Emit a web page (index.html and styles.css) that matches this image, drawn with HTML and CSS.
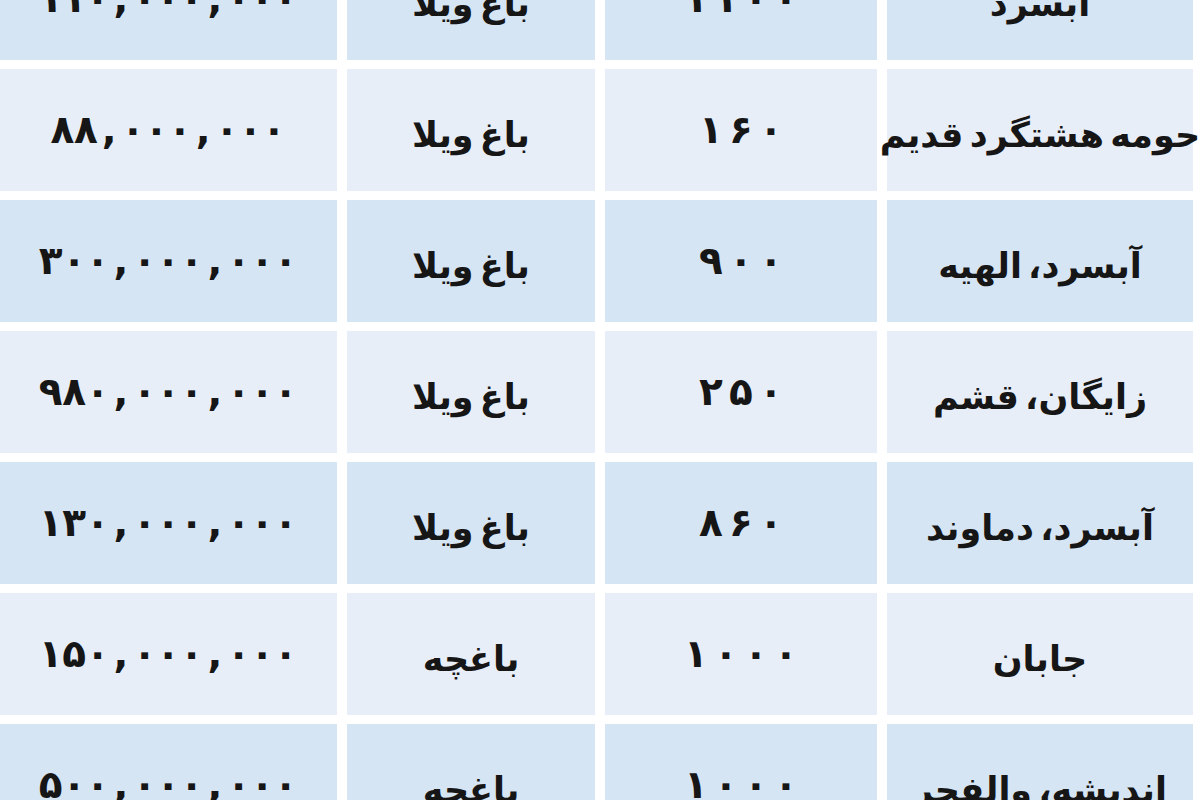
FILE: index.html
```html
<!DOCTYPE html>
<html lang="fa">
<head>
<meta charset="utf-8">
<title>قیمت باغ ویلا</title>
<link rel="stylesheet" href="styles.css">
</head>
<body>
<div class="table" dir="rtl">
  <div class="row blue">
    <div class="cell">آبسرد</div>
    <div class="cell"><span class="digits area"><span>۱</span><span>۱</span><span>۰</span><span>۰</span></span></div>
    <div class="cell">باغ ویلا</div>
    <div class="cell"><span class="digits price"><span>۱</span><span>۱</span><span>۰</span><span>,</span><span>۰</span><span>۰</span><span>۰</span><span>,</span><span>۰</span><span>۰</span><span>۰</span></span></div>
  </div>
  <div class="row light">
    <div class="cell">حومه هشتگرد قدیم</div>
    <div class="cell"><span class="digits area"><span>۱</span><span>۶</span><span>۰</span></span></div>
    <div class="cell">باغ ویلا</div>
    <div class="cell"><span class="digits price"><span>۸</span><span>۸</span><span>,</span><span>۰</span><span>۰</span><span>۰</span><span>,</span><span>۰</span><span>۰</span><span>۰</span></span></div>
  </div>
  <div class="row blue">
    <div class="cell">آبسرد، الهیه</div>
    <div class="cell"><span class="digits area"><span>۹</span><span>۰</span><span>۰</span></span></div>
    <div class="cell">باغ ویلا</div>
    <div class="cell"><span class="digits price"><span>۳</span><span>۰</span><span>۰</span><span>,</span><span>۰</span><span>۰</span><span>۰</span><span>,</span><span>۰</span><span>۰</span><span>۰</span></span></div>
  </div>
  <div class="row light">
    <div class="cell">زایگان، قشم</div>
    <div class="cell"><span class="digits area"><span>۲</span><span>۵</span><span>۰</span></span></div>
    <div class="cell">باغ ویلا</div>
    <div class="cell"><span class="digits price"><span>۹</span><span>۸</span><span>۰</span><span>,</span><span>۰</span><span>۰</span><span>۰</span><span>,</span><span>۰</span><span>۰</span><span>۰</span></span></div>
  </div>
  <div class="row blue">
    <div class="cell">آبسرد، دماوند</div>
    <div class="cell"><span class="digits area"><span>۸</span><span>۶</span><span>۰</span></span></div>
    <div class="cell">باغ ویلا</div>
    <div class="cell"><span class="digits price"><span>۱</span><span>۳</span><span>۰</span><span>,</span><span>۰</span><span>۰</span><span>۰</span><span>,</span><span>۰</span><span>۰</span><span>۰</span></span></div>
  </div>
  <div class="row light">
    <div class="cell">جابان</div>
    <div class="cell"><span class="digits area"><span>۱</span><span>۰</span><span>۰</span><span>۰</span></span></div>
    <div class="cell">باغچه</div>
    <div class="cell"><span class="digits price"><span>۱</span><span>۵</span><span>۰</span><span>,</span><span>۰</span><span>۰</span><span>۰</span><span>,</span><span>۰</span><span>۰</span><span>۰</span></span></div>
  </div>
  <div class="row blue">
    <div class="cell">اندیشه، والفجر</div>
    <div class="cell"><span class="digits area"><span>۱</span><span>۰</span><span>۰</span><span>۰</span></span></div>
    <div class="cell">باغچه</div>
    <div class="cell"><span class="digits price"><span>۵</span><span>۰</span><span>۰</span><span>,</span><span>۰</span><span>۰</span><span>۰</span><span>,</span><span>۰</span><span>۰</span><span>۰</span></span></div>
  </div>
</div>
</body>
</html>
```

FILE: styles.css
```css
html, body {
  margin: 0;
  padding: 0;
  background: #ffffff;
  overflow: hidden;
}

.table {
  width: 1193px;
  margin-top: -62px;
  display: grid;
  grid-template-columns: 306px 272px 248px 338px;
  grid-auto-rows: 122px;
  column-gap: 10px;
  row-gap: 9px;
  direction: rtl;
  font-family: "DejaVu Sans", "Noto Sans", sans-serif;
  font-size: 35px;
  font-weight: bold;
  color: #161616;
}

.row {
  display: contents;
}

.cell {
  display: flex;
  align-items: center;
  justify-content: center;
  white-space: nowrap;
  padding-top: 10px;
  box-sizing: border-box;
  word-spacing: -6px;
}

.blue .cell {
  background: #d6e5f4;
}

.light .cell {
  background: #e8eef8;
}

.digits {
  display: inline-flex;
  direction: ltr;
  margin-top: -12px;
  font-size: 39px;
}

.digits > span {
  display: inline-block;
  text-align: center;
}

.price > span {
  width: 23.5px;
}

.area > span {
  width: 30px;
}
```
